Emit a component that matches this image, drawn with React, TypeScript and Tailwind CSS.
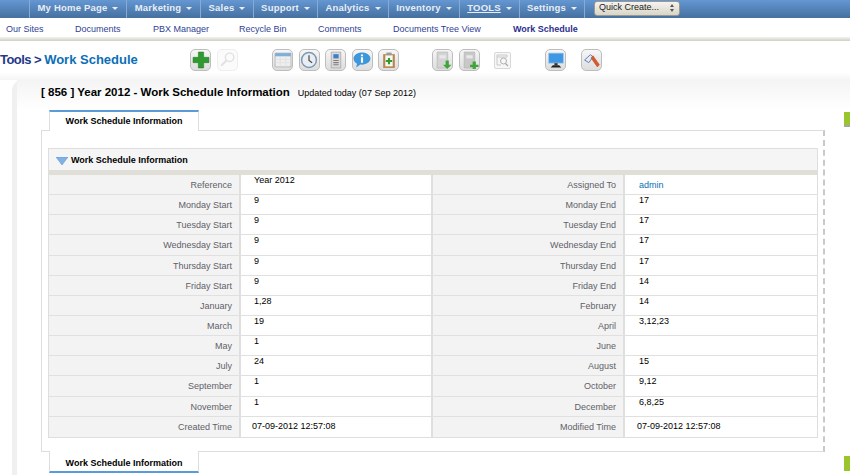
import React from 'react';

const NAV = [
  { label: 'My Home Page', w: 'w-[97px]' },
  { label: 'Marketing', w: 'w-[74px]' },
  { label: 'Sales', w: 'w-[53px]' },
  { label: 'Support', w: 'w-[64px]' },
  { label: 'Analytics', w: 'w-[71px]' },
  { label: 'Inventory', w: 'w-[71px]' },
  { label: 'TOOLS', w: 'w-[60px]', active: true },
  { label: 'Settings', w: 'w-[65px]' },
];

const SUBNAV = [
  { label: 'Our Sites', w: 'w-[75px]', pl: 'pl-[6px]' },
  { label: 'Documents', w: 'w-[78px]', pl: 'pl-0' },
  { label: 'PBX Manager', w: 'w-[86px]', pl: 'pl-0' },
  { label: 'Recycle Bin', w: 'w-[79px]', pl: 'pl-0' },
  { label: 'Comments', w: 'w-[75px]', pl: 'pl-0' },
];

const ROWS = [
  ['Reference', 'Year 2012', 'Assigned To', 'admin'],
  ['Monday Start', '9', 'Monday End', '17'],
  ['Tuesday Start', '9', 'Tuesday End', '17'],
  ['Wednesday Start', '9', 'Wednesday End', '17'],
  ['Thursday Start', '9', 'Thursday End', '17'],
  ['Friday Start', '9', 'Friday End', '14'],
  ['January', '1,28', 'February', '14'],
  ['March', '19', 'April', '3,12,23'],
  ['May', '1', 'June', ''],
  ['July', '24', 'August', '15'],
  ['September', '1', 'October', '9,12'],
  ['November', '1', 'December', '6,8,25'],
  ['Created Time', '07-09-2012 12:57:08', 'Modified Time', '07-09-2012 12:57:08'],
];

function IconBox({ children, faded }: { children: React.ReactNode; faded?: boolean }) {
  return (
    <div
      className={`w-[21px] h-[22px] rounded-[5px] border flex items-center justify-center ${
        faded ? 'border-[#eeeeee] bg-[#fbfbfb]' : 'border-[#bdbdbd] bg-gradient-to-b from-[#f6f6f6] to-[#dddddd]'
      }`}
    >
      <svg width="18" height="18" viewBox="0 0 17 17">{children}</svg>
    </div>
  );
}

function DocPlus({ dark }: { dark?: boolean }) {
  return (
    <>
      <path d="M3 1h10v15H3z" fill={dark ? '#c8c8c8' : '#d4d4d4'} stroke="#b0b0b0" strokeWidth="0.6" />
      <path d="M5 4h6v3H5z" fill="#e8e8e8" />
      <path d={dark ? 'M11 10h3v3h2.500v2H14v2h-3v-2H8.500v-2H11z' : 'M11 9h3v4h2.500L12.500 17 8.500 13H11z'} fill="#3fa53a" />
    </>
  );
}

function Cell({ row, last }: { row: string[]; last: boolean }) {
  const valuePad = last ? 'pt-[4px]' : '';
  return (
    <div className="flex h-[20.15px] border-b border-[#e0e0e0] last:border-b-0">
      <div className="w-[192px] shrink-0 bg-[#f3f3f3] border-r-2 border-[#dfdfdf] text-right pr-[7px] pt-[3px] text-[#5f6168] leading-[14px]">
        {row[0]}
      </div>
      <div className={`w-[192px] shrink-0 bg-white border-r-2 border-[#dfdfdf] text-black leading-[11px] ${last ? 'pl-[11px]' : 'pl-[13px]'} ${valuePad}`}>
        {row[1]}
      </div>
      <div className="w-[192px] shrink-0 bg-[#f3f3f3] border-r-2 border-[#dfdfdf] text-right pr-[7px] pt-[3px] text-[#5f6168] leading-[14px]">
        {row[2]}
      </div>
      <div
        className={`w-[192px] shrink-0 bg-white leading-[11px] ${last ? 'pl-[12px]' : 'pl-[14px]'} ${valuePad} ${
          row[3] === 'admin' ? 'text-[#0b6fb5] pt-[5px]' : 'text-black'
        }`}
      >
        {row[3]}
      </div>
    </div>
  );
}

function TabRow({ bottom }: { bottom?: boolean }) {
  return (
    <div
      className={`w-[150px] bg-white border-x border-[#dddddd] flex items-center justify-center font-bold text-[9px] text-black ${
        bottom ? 'h-[22px] pt-[6px] border-b-2 border-b-[#5b9bd8]' : 'h-[21px] border-t-2 border-t-[#5b9bd8]'
      }`}
    >
      Work Schedule Information
    </div>
  );
}

export default function App() {
  return (
    <div className="w-[850px] h-[475px] overflow-hidden bg-white font-['Liberation_Sans',Arial,sans-serif] text-[9px]">
      {/* top nav */}
      <div className="h-[18px] bg-gradient-to-b from-[#6597d3] to-[#45709f] flex items-center pl-[29px]">
        {NAV.map((n) => (
          <div
            key={n.label}
            className={`${n.w} h-full pb-[2px] border-l border-[#86aad4] flex items-center justify-center gap-[5px] text-[#e8eef6] font-bold text-[9.5px] tracking-[0.2px]`}
          >
            <span className={n.active ? 'underline' : ''}>{n.label}</span>
            <span className="w-0 h-0 border-x-[3px] border-x-transparent border-t-[3px] border-t-[#e8eef6]" />
          </div>
        ))}
        <div className="h-full pb-[2px] border-l border-[#86aad4] pl-[9px] flex items-center">
          <div className="w-[86px] h-[15px] rounded-[3px] bg-gradient-to-b from-[#f5f3ec] to-[#d8d5ca] border border-[#9a9a90] flex items-center justify-between pl-[4px] pr-[5px] text-[9px] text-[#222222]">
            <span>Quick Create...</span>
            <span className="flex flex-col gap-[2px]">
              <span className="block w-0 h-0 border-x-[2px] border-x-transparent border-b-[3px] border-b-[#555555]" />
              <span className="block w-0 h-0 border-x-[2px] border-x-transparent border-t-[3px] border-t-[#555555]" />
            </span>
          </div>
        </div>
      </div>

      {/* sub nav */}
      <div className="h-[19px] pt-[5px] flex items-center text-[9px] text-[#2f3f96]">
        {SUBNAV.map((s) => (
          <div key={s.label} className={`${s.w} ${s.pl}`}>
            {s.label}
          </div>
        ))}
        <div className="w-[120px]">Documents Tree View</div>
        <div className="font-bold text-[#2d2f8f]">Work Schedule</div>
      </div>
      <div className="h-[4px] bg-gradient-to-b from-[#f4f4ee] to-[#cfcfc8]" />

      {/* toolbar */}
      <div className="h-[39px] flex items-center pb-[1px] bg-gradient-to-b from-white via-white via-80% to-[#f5f5f5]">
        <div className="w-[189px] shrink-0 text-[13px] font-bold whitespace-nowrap text-[#0b6fb5]">
          <span className="text-[#1f3a8a] tracking-[-0.55px]">Tools &gt; </span>Work Schedule
        </div>
        <div className="flex gap-[6px] ml-[1px]">
          <IconBox>
            <path d="M6 1h5v5h5v5h-5v5H6v-5H1V6h5z" fill="#2f9a2f" stroke="#1f7a1f" strokeWidth="0.5" />
          </IconBox>
          <IconBox faded>
            <circle cx="10" cy="6" r="4" fill="none" stroke="#e2e2e2" strokeWidth="1.4" />
            <path d="M7 9l-5 5" stroke="#e2e2e2" strokeWidth="2" />
          </IconBox>
        </div>
        <div className="flex gap-[5.5px] ml-[34px]">
          <IconBox>
            <path d="M1 2h15v13H1z" fill="#eeeeee" stroke="#a9a9a9" strokeWidth="0.7" />
            <path d="M1 2h15v3H1z" fill="#7faedb" />
            <path d="M1 8h15M1 11h15M6 5v10M11 5v10" stroke="#dddddd" strokeWidth="0.6" />
          </IconBox>
          <IconBox>
            <circle cx="8.500" cy="8.500" r="7" fill="#e8eef3" stroke="#7d99b2" strokeWidth="1.400" />
            <path d="M8.500 4v5l3 2" fill="none" stroke="#444444" strokeWidth="1.100" />
          </IconBox>
          <IconBox>
            <path d="M4 1h9v15H4z" fill="#d9d9d9" stroke="#9a9a9a" strokeWidth="0.6" />
            <path d="M6 3h5v4H6z" fill="#3f7fc7" />
            <path d="M6 9h5M6 11h5M6 13h5" stroke="#808080" strokeWidth="1" />
          </IconBox>
          <IconBox>
            <path d="M8.500 1.500c4.400 0 8 2.500 8 5.700s-3.600 5.700-8 5.700c-.5 0-1 0-1.500-.1L3 15.500l.8-3.500C1.800 11 .5 9.200.5 7.200c0-3.200 3.600-5.700 8-5.700z" fill="#3d97dd" />
            <path d="M7.500 6h2v5h-2zM7.500 3.300h2v1.700h-2z" fill="#ffffff" />
          </IconBox>
          <IconBox>
            <path d="M3 3h11v13H3z" fill="#b9854f" />
            <path d="M5 4h7v10.500H5z" fill="#f7f7f2" />
            <path d="M6 1.500h5V4H6z" fill="#9a9a9a" />
            <path d="M7.500 6.500h2v2h2v2h-2v2h-2v-2h-2v-2h2z" fill="#2f9a2f" />
          </IconBox>
        </div>
        <div className="flex gap-[6px] ml-[33px]">
          <IconBox><DocPlus /></IconBox>
          <IconBox><DocPlus dark /></IconBox>
        </div>
        <div className="ml-[14px] w-[17px] h-[17px] rounded-[2px] border border-[#d8d8d8] bg-[#f7f7f7] flex items-center justify-center">
          <svg width="13" height="13" viewBox="0 0 13 13">
            <path d="M1 1h10v2H1zM1 3v8h4" fill="none" stroke="#bdbdbd" strokeWidth="0.8" />
            <circle cx="7.500" cy="7" r="3" fill="none" stroke="#a8a8a8" strokeWidth="0.9" />
            <path d="M9.500 9.500l2.500 2.500" stroke="#a8a8a8" strokeWidth="1.200" />
          </svg>
        </div>
        <div className="ml-[34px]">
          <IconBox>
            <path d="M1.500 2h14v9.500h-14z" fill="#3d97e4" stroke="#a9c9e6" strokeWidth="0.7" />
            <path d="M7 11.500h3v2H7z" fill="#333333" />
            <path d="M3.500 15.500l2-2h6l2 2z" fill="#222222" />
          </IconBox>
        </div>
        <div className="ml-[15px]">
          <IconBox>
            <path d="M1.500 8.500L7 3.500l2.500 2-4 5.500z" fill="#e6ebf3" stroke="#5b7bb0" strokeWidth="0.9" />
            <path d="M7.500 6.500l2-2 6 8.500-2 2z" fill="#d85a2a" stroke="#b33d17" strokeWidth="0.4" />
          </IconBox>
        </div>
      </div>

      {/* card */}
      <div className="ml-[12px] w-[838px] h-[400px] rounded-tl-[10px] border-l-[5px] border-[#f0f0f0]">
        <div className="h-[30px] pl-[24px] pt-[4px] flex items-start gap-[8px] bg-gradient-to-b from-[#f4f4f4] to-white">
          <span className="font-bold text-[11.5px] leading-[16px] text-black">[ 856 ] Year 2012 - Work Schedule Information</span>
          <span className="text-[9px] leading-[18px] text-black">Updated today (07 Sep 2012)</span>
        </div>

        <div className="flex items-end justify-between">
          <div className="ml-[32px] -mb-px relative">
            <TabRow />
          </div>
          <div className="w-[6px] h-[15px] mb-[3px] bg-[#98c62c] border-b-2 border-[#a5a5a5]" />
        </div>

        <div
          className="ml-[24px] w-[784px] h-[322px] border-y border-l border-[#dddddd] border-r-2 border-r-[#c9c9c9] pl-[6px] pt-[17px]"
          style={{ borderRightStyle: 'dashed' }}
        >
          <div className="w-[770px] border border-[#dedede]">
            <div className="h-[26px] pt-[2px] bg-[#f5f5f5] border-b-[5px] border-[#dfdfd8] flex items-center pl-[7px] gap-[3px] font-bold text-[9px] text-black">
              <svg width="12" height="8" viewBox="0 0 12 8">
                <path d="M0 0h12L6 8z" fill="#7fb2e5" stroke="#5b8fc7" strokeWidth="0.5" />
              </svg>
              Work Schedule Information
            </div>
            {ROWS.map((r, i) => (
              <Cell key={r[0]} row={r} last={i === ROWS.length - 1} />
            ))}
          </div>
        </div>

        <div className="flex items-start justify-between -mt-px">
          <div className="ml-[32px] relative">
            <TabRow bottom />
          </div>
          <div className="w-[6px] h-[15px] mt-[5px] bg-[#98c62c]" />
        </div>
      </div>
    </div>
  );
}
